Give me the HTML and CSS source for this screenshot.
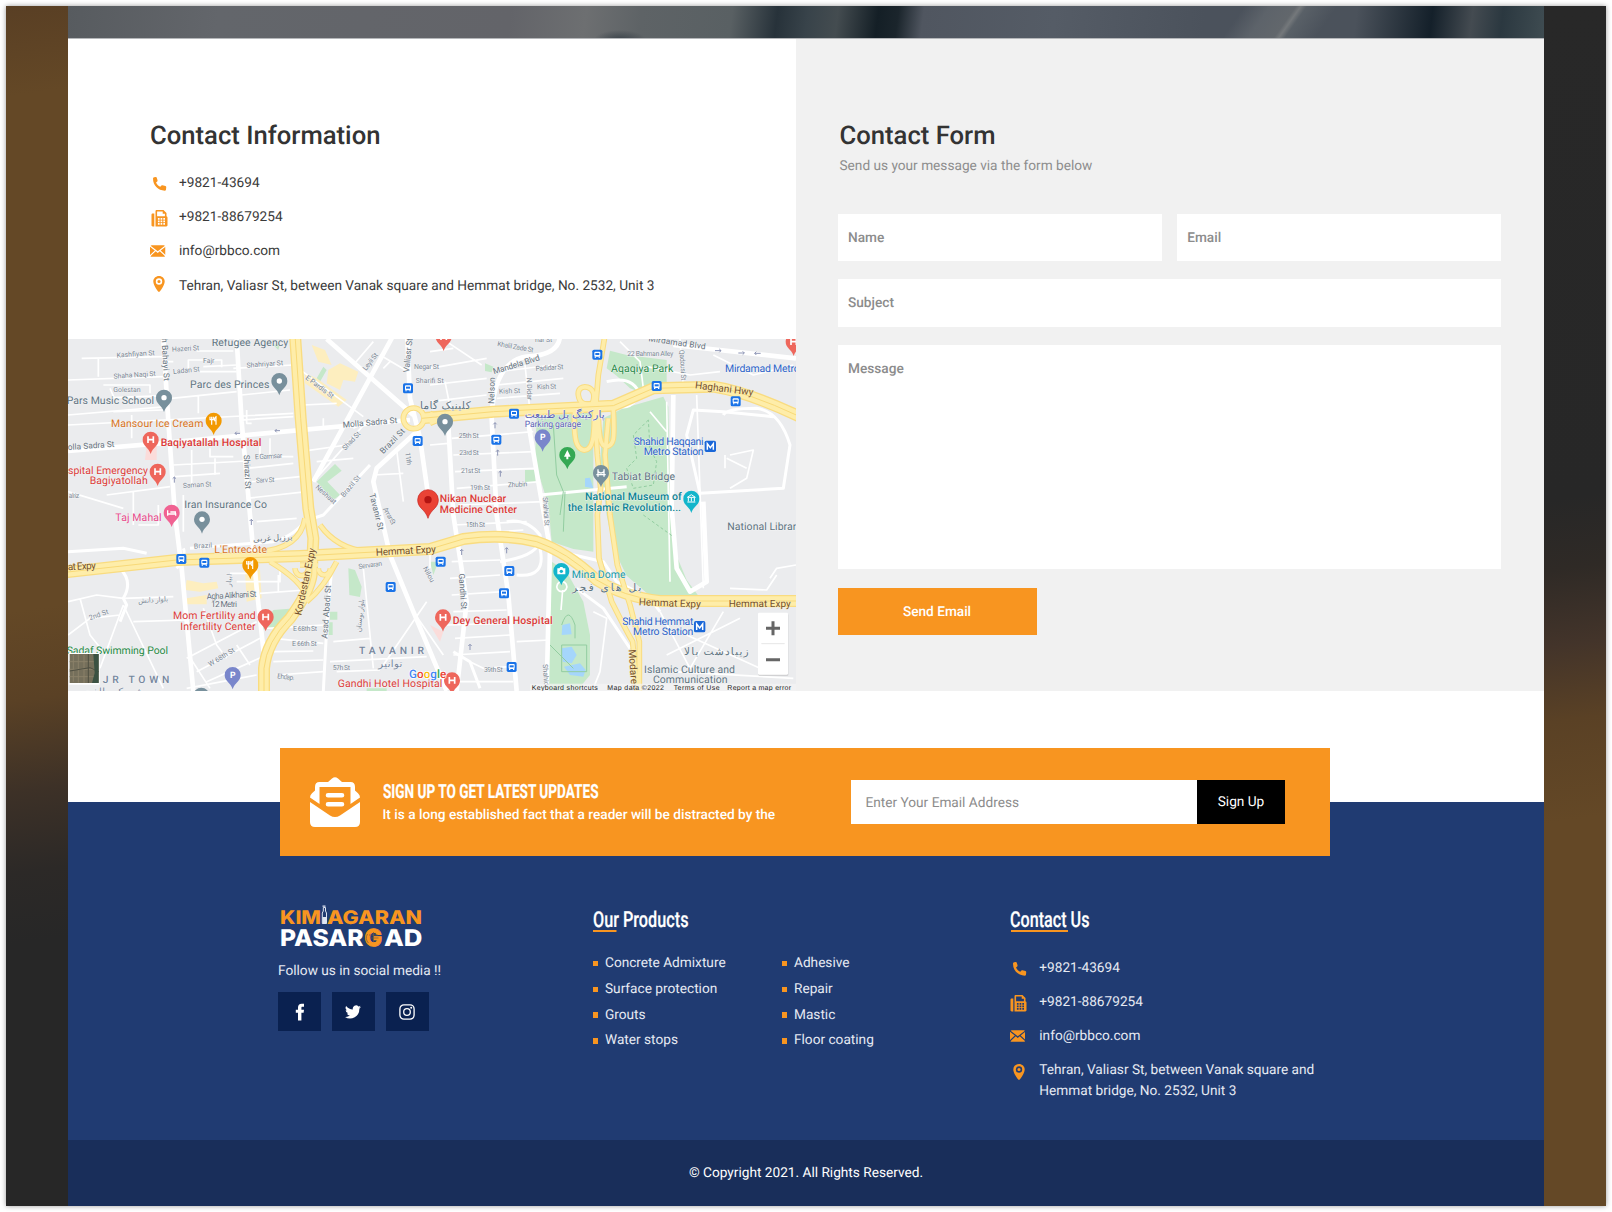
FILE: index.html
```html
<!DOCTYPE html>
<html lang="en">
<head>
<meta charset="utf-8">
<title>Contact - Kimiagaran Pasargad</title>
<link rel="stylesheet" href="styles.css">
</head>
<body>
<svg class="defs" width="0" height="0" aria-hidden="true">
  <defs>
    <symbol id="i-phone" viewBox="0 0 16 16"><path d="M2.2.8 4 .5c.5-.1.9.2 1 .6l.9 3c.1.4 0 .8-.3 1.1L4.300 6.300c.9 2 2.300 3.500 4.500 4.700l1.300-1.400c.3-.3.7-.4 1.100-.3l3.200.8c.5.1.8.6.8 1.100l-.3 2.900c-.1.700-.6 1-1.300 1C6.500 15 .9 9.500 1.100 2.200c0-.7.4-1.300 1.100-1.400z"/></symbol>
    <symbol id="i-fax" viewBox="0 0 16 17"><path fill-rule="evenodd" d="M1.200 3.500h1.600v13H1.200C.5 16.500 0 16 0 15.300V4.700c0-.7.5-1.200 1.200-1.200zM4 1.200C4 .5 4.500 0 5.200 0H12l3 3v3.200c.6.200 1 .7 1 1.300v7.800c0 .7-.5 1.200-1.200 1.200H4zM5.600 1.600v4.600h7.800V3.800h-2.200V1.600zM6.400 8v1.700h1.700V8zm2.700 0v1.700h1.700V8zm2.700 0v1.700h1.700V8zM6.400 10.600v1.600h1.700v-1.600zm2.700 0v1.600h1.700v-1.600zm2.700 0v1.600h1.700v-1.600zM6.400 13.100v1.600h1.700v-1.600zm2.700 0v1.600h1.700v-1.600zm2.700 0v1.600h1.700v-1.600z"/></symbol>
    <symbol id="i-mail" viewBox="0 0 16 12"><path d="M.6.500C.9.200 1.300 0 1.800 0h12.400c.5 0 .9.200 1.200.500L8 6.300zM0 1.500 5 5.600 0 10.200zM16 1.500v8.700l-5-4.600zM5.900 6.300 8 8l2.100-1.700 5.400 5c-.3.400-.8.700-1.300.7H1.800c-.5 0-1-.3-1.300-.7z"/></symbol>
    <symbol id="i-pin" viewBox="0 0 12 16"><path fill-rule="evenodd" d="M6 0c3.200 0 5.700 2.400 5.700 5.500C11.700 9.500 6.800 16 6 16S.3 9.500.3 5.500C.3 2.400 2.800 0 6 0zm0 2.300a3.200 3.200 0 1 0 0 6.400 3.200 3.200 0 0 0 0-6.400zM6 3.900a1.600 1.600 0 1 1 0 3.200 1.600 1.600 0 0 1 0-3.200z"/></symbol>
    <g id="m-bus"><rect x="-15" y="-15" width="30" height="30" rx="5" fill="#1a73e8"/><rect x="-9" y="-9" width="18" height="15" rx="3" fill="#fff"/><path d="M-6-5H6V1H-6z" fill="#1a73e8"/><path d="M-8 6h4v3h-4zM4 6h4v3H4z" fill="#fff"/></g>
    <g id="m-base"><path d="M0-24A24 24 0 0 1 24 0C24 20 6 22 0 43-6 22-24 20-24 0A24 24 0 0 1 0-24z"/></g>
    <g id="m-hosp"><use href="#m-base" fill="#ee675c"/><path d="M-8-10v20M8-10v20M-8 0H8" stroke="#fff" stroke-width="5"/></g>
    <g id="m-dot"><use href="#m-base" fill="#78909c"/><circle r="8" fill="#fff"/></g>
    <g id="m-food"><use href="#m-base" fill="#f29900"/><path d="M-6-12v24M-11-12v9h10v-9M7 12v-24c-5 3-5 9-3 14" stroke="#fff" stroke-width="3.500" fill="none"/></g>
    <g id="m-park"><use href="#m-base" fill="#7986cb"/><text class="pk" x="-8" y="9">P</text></g>
    <g id="m-metro"><rect x="-17" y="-17" width="34" height="34" rx="5" fill="#1a67d8"/><path d="M-9 10V-8l9 12 9-12v18" stroke="#fff" stroke-width="4.500" fill="none"/></g>
    <!-- expressways, drawn twice: casing and face -->
    <path id="hw-main" d="M705 0 722 250 745 520 760 610 755 720Q748 770 690 850 620 920 612 1000V1080M14 712 350 675 720 663 1110 642 1210 612Q1330 595 1430 620 1520 650 1610 735 1690 785 1800 798H2220M1085 250 1300 230 1660 212 1780 160 1960 155Q2060 170 2220 245"/>
    <path id="hw-ramp" d="M1635 0 1615 120 1605 240 1612 360 1622 460 1612 540 1617 670 1655 800Q1700 890 1718 920L1732 1080M1645 250 1635 360 1650 540 1672 690 1710 810 1738 920V1080M1597 205C1620 150 1550 140 1555 180 1560 220 1590 200 1620 225M1544 220C1540 320 1550 340 1570 345 1610 350 1600 260 1605 220M1660 225C1665 320 1660 330 1640 335 1620 335 1615 300 1615 220M630 680Q730 740 740 790M720 690h54M705 700a20 22 0 1 0 40 0M775 700a18 20 0 1 0 36 0M780 570Q830 640 920 650L1110 650M735 550Q720 640 600 650M830 680Q790 760 740 800M1110 235l35 15-35 15M1030 250a31 31 0 1 0 62 0a31 31 0 1 0-62 0"/>
  </defs>
</svg>

<div class="frame">
  <div class="strip strip-left"></div>
  <div class="page">
    <div class="hero"></div>

    <main class="contact">
      <section class="info">
        <div class="info-text">
          <h1 class="title">Contact Information</h1>
          <ul class="contact-list">
            <li><span class="ic"><svg class="phone"><use href="#i-phone"/></svg></span>+9821-43694</li>
            <li><span class="ic"><svg class="fax"><use href="#i-fax"/></svg></span>+9821-88679254</li>
            <li><span class="ic"><svg class="mail"><use href="#i-mail"/></svg></span>info@rbbco.com</li>
            <li><span class="ic"><svg class="pin"><use href="#i-pin"/></svg></span>Tehran, Valiasr St, between Vanak square and Hemmat bridge, No. 2532, Unit 3</li>
          </ul>
        </div>
        <svg class="map" viewBox="24 12 2184 1056" preserveAspectRatio="none">
          <rect x="24" y="12" width="2184" height="1056" fill="#ebecee"/>
          <!-- parks -->
          <g fill="#c5e8c9">
            <path d="M1430 245 1600 230V650L1540 642 1475 620 1465 510 1425 380z"/>
            <path d="M1630 250 1690 220 1810 185 1825 215 1830 520 1845 650 1880 735 1915 782H1770L1700 722 1660 640 1640 540 1620 380z"/>
            <path d="M1475 680 1520 710 1570 800 1590 900V1020L1550 1068H1465V900z"/>
            <path d="M1650 47 1700 60 1820 75V142L1750 175 1710 160 1670 122 1640 100z"/>
            <path d="M825 387 845 407 802 440 840 480 820 495 770 440zM865 700 885 705 905 755 900 786 868 780zM640 825 708 820 655 880 600 885zM810 830h22v24h-22zM808 862h10v38h-12zM1395 405h32v36h-32zM1110 680 1135 680 1120 720zM640 30 660 25 655 45zM770 130 790 95 800 105 780 140zM1275 85 1300 95 1295 112 1275 108zM920 1060h60v8h-60z"/>
          </g>
          <g fill="#a5d6fb"><path d="M1507 870 1530 865 1535 898 1505 900zM1505 940 1535 935 1550 960 1535 985 1508 980zM1512 995 1560 985 1577 1005 1570 1025 1530 1020zM1575 430 1590 428 1600 460 1575 455z"/></g>
          <g fill="#fdeebf"><path d="M755 30 795 45 815 90 775 80zM805 105 840 85 895 110 885 140 850 135 840 165 800 145zM735 115 770 130 860 195 835 215 735 145zM380 735 430 745 470 740 475 760 420 770 375 765zM380 790 440 780 440 808 380 808zM555 705 600 705 605 790 560 800z"/></g>
          <path d="M260 330h30v45h-35zM1110 870 1150 890 1140 920z" fill="#fbdcda"/>
          <!-- minor streets -->
          <g class="st s1">
            <path d="M65 70 310 65M115 70v55M24 135 310 125M130 150h140v25M150 160l12 28 150-6M24 240 320 215M24 270 700 235M160 230l150-5M215 240v70M420 110h110M385 100v-25h100v22M410 48h110M430 95l100-5M415 180v55M520 100 700 90M545 180 690 165M560 225v40h15M545 255 700 245M335 190 530 170M340 80h-20M450 340v25h70M395 345v110M340 390 560 378M465 370v50M345 425 480 415M600 320v45h100M560 400 700 385M575 440 720 425M630 310v60M560 490 740 470M140 480 330 455M220 470v100M24 470 190 520M370 480v110M235 570h60v-60M590 560l120-10"/>
            <path d="M960 60 1045 110M880 90 940 20M970 100 990 80M730 210 830 205M790 250v30M720 350 860 330M770 380 880 370M880 280 920 260 760 440M715 100 910 245M1010 345 1030 500M940 420 1030 415M1110 50 1180 40M1110 100 1280 70M1110 150 1280 130M1155 140 1175 240M1160 20 1265 90M1110 200 1280 180M1310 150 1510 130M1310 190 1500 175M1315 110 1480 90M1395 90 1410 230M1175 310 1420 290M1180 360 1420 350M1185 410 1425 400M1190 460 1440 440M1195 510 1450 500M1110 330 1165 325"/>
            <path d="M1680 20 1740 80 1750 160M1860 10 1870 160M1760 95 1890 120 1980 110M1960 60 2080 120 2200 90M2010 360 2080 345 2060 430 2010 460M1820 200 1830 740M1910 180 1930 760M1770 230 1820 290M1995 360v40M2000 370 2060 400"/>
            <path d="M24 800 110 780 190 790 340 785M24 900 90 850 180 840M60 790 90 900 130 950M190 810 310 1060M190 810 120 1000M220 860 380 855M430 820 470 930 500 970M380 970 590 860M410 1010 600 910M440 1040 620 960M385 960 450 1060M530 930 570 990M380 1060 590 1020M510 715h60M530 740h130v-40M655 720v50M600 775 735 765M640 980 790 975M620 880 790 870M640 910 790 925M640 950 760 948M650 1020 790 1010M810 980 1100 965M830 1010 960 1005M820 920 930 910M910 700 940 1000M1100 800l-130 190M1060 830 1150 960M1110 640v60M1175 680 1320 675M1170 730 1320 720M1175 780 1330 770M1180 830 1340 825M1160 870 1340 865M1185 910 1350 900M1180 960 1350 950M1230 980 1270 1000 1350 995M1200 1040h160M1180 570 1400 560M1190 600l200-15M1370 920 1470 915M1600 830 1640 850 1620 1010 1600 1060M1800 830 1890 1000 1990 830M1820 960 2040 850M1880 900 2100 1000M1840 1010 2200 1030M2130 730 2150 700 2208 690M2010 760 2120 765 2150 720"/>
          </g>
          <!-- larger streets -->
          <g class="st s2">
            <path d="M310 12 325 260 345 540 365 700 400 1068M530 12 545 260 570 540 590 760 612 960M24 348 300 325 560 300 1050 255M800 12 1060 240M1042 12 1050 190 1080 310 1110 520M1070 290 950 400 940 440 990 660 1060 830 1160 1068M760 440 1000 1M1300 12"/>
            <path d="M1500 0Q1500 60 1400 65 1300 80 1295 250L1310 540 1345 780 1370 1068M1165 270 1180 540 1220 800 1190 1068M1400 235 1440 470 1470 640 1460 1068M1840 30 2208 70M1840 180 1835 520 1850 700 1890 770 1940 740 1930 500"/>
          </g>
          <g class="st s3">
            <path d="M24 650 190 640 260 655M180 700Q220 740 190 790L200 810 180 860M350 700Q380 660 370 640M930 390 790 540 730 560M815 700 800 880 790 1068M740 550Q710 600 640 620L390 640M1180 950 1230 980 1260 1060M1990 240Q2000 220 2090 220 2160 230 2190 330L2170 460 1920 475 1880 300 1900 225 1990 230 2140 245M1640 140Q1720 120 1740 180 1700 240 1660 200M1500 650 1630 680 1670 740 1770 790 1800 830M1550 760 1630 820 1710 940M1440 480 1700 455M1320 680Q1450 660 1440 600 1400 550 1340 560M1370 720Q1460 730 1440 640"/>
          </g>
          <g fill="none" stroke="#92cda0" stroke-width="3"><path d="M1480 270 1490 420 1510 470 1500 540M1515 470l-5 120M1505 930h75v80h-75zM1470 930 1540 1000M1505 870q20-60 40 0v40"/><path d="M1765 255 1720 300 1730 370 1700 400 1720 460 1780 450 1790 380 1770 340zM1750 540l90 65" stroke-dasharray="9 7"/></g>
          <path d="M1505 740a15 15 0 1 0 1 0M1508 765l-5 60" class="st s1"/>
          <!-- highways -->
          <g class="hw">
            <use href="#hw-ramp" stroke="#f9dc80" stroke-width="17"/>
            <use href="#hw-main" stroke="#f9dc80" stroke-width="36"/>
            <use href="#hw-ramp" stroke="#feeda9" stroke-width="11"/>
            <use href="#hw-main" stroke="#feeda9" stroke-width="28"/>
            <use href="#hw-main" stroke="#f8d978" stroke-width="3"/>
          </g>
          <!-- place pins -->
          <use href="#m-dot" x="312" y="188"/><use href="#m-dot" x="658" y="138"/><use href="#m-food" x="461" y="257"/>
          <use href="#m-hosp" x="272" y="314"/><use href="#m-hosp" x="293" y="410"/><use href="#m-dot" x="426" y="553"/>
          <g transform="translate(335 533)"><use href="#m-base" fill="#f06292"/><path d="M-12-7v16M-12 4h24v5M-4-2h15v6" stroke="#fff" stroke-width="4" fill="none"/></g>
          <use href="#m-food" x="571" y="690"/><use href="#m-hosp" x="617" y="846"/><use href="#m-park" x="518" y="1020"/><use href="#m-dot" x="424" y="1082"/>
          <use href="#m-hosp" x="1151" y="5"/><use href="#m-hosp" x="2201" y="20"/><use href="#m-dot" x="1155" y="260"/><use href="#m-park" x="1448" y="307"/>
          <g transform="translate(1522 360)"><use href="#m-base" fill="#34a853"/><path d="M0-15 10 5H3v8h-6V5h-7z" fill="#fff"/></g>
          <g transform="translate(1623 414)"><use href="#m-base" fill="#78909c"/><path d="M-9-11v22M9-11v22M-14 5h28M-9-5Q0 5 9-5" stroke="#fff" stroke-width="4" fill="none"/></g>
          <g transform="translate(1894 491)"><use href="#m-base" fill="#12b5cb"/><path d="M-12-4 0-12 12-4zM-9-2v10M0-2v10M9-2v10M-12 10h24" stroke="#fff" stroke-width="3" fill="none"/></g>
          <g transform="translate(1504 708)"><use href="#m-base" fill="#12b5cb"/><path d="M-12-8h6l3-4h6l3 4h6V10h-24z" fill="#fff"/><circle cy="1" r="5" fill="#12b5cb"/></g>
          <use href="#m-hosp" x="1149" y="847"/><use href="#m-hosp" x="1176" y="1036"/>
          <g transform="translate(1104 494)"><path d="M0-30A31 31 0 0 1 31 0C31 27 8 28 0 56-8 28-31 27-31 0A31 31 0 0 1 0-30z" fill="#ea4335" stroke="#c5221f" stroke-width="2"/><circle r="11" fill="#b31412"/></g>
          <use href="#m-bus" x="1044" y="160"/><use href="#m-bus" x="1073" y="318"/><use href="#m-bus" x="1612" y="59"/><use href="#m-bus" x="1790" y="153"/><use href="#m-bus" x="2027" y="199"/><use href="#m-bus" x="1362" y="236"/><use href="#m-bus" x="1309" y="314"/><use href="#m-bus" x="364" y="672"/><use href="#m-bus" x="433" y="683"/><use href="#m-bus" x="992" y="756"/><use href="#m-bus" x="1142" y="680"/><use href="#m-bus" x="1348" y="708"/><use href="#m-bus" x="1332" y="775"/><use href="#m-bus" x="1355" y="996"/>
          <use href="#m-metro" x="1951" y="334"/><use href="#m-metro" x="1919" y="875"/>
          <path d="M540 295h-15l5-5m-5 5 5 5M660 287h-15l5-5m-5 5 5 5M343 443v-17l-5 5m5-5 5 5M1305 280v-17l-5 5m5-5 5 5M1313 362v-17l-5 5m5-5 5 5M1321 425v-17l-5 5m5-5 5 5M574 570v-17l-5 5m5-5 5 5M1205 660v-17l-5 5m5-5 5 5M1340 655v-17l-5 5m5-5 5 5M1230 945v-17l-5 5m5-5 5 5M1965 47h18l-5-5m5 5-5 5M2035 54h18l-5-5m5 5-5 5M2102 55h-18l5-5m-5 5 5 5" fill="none" stroke="#8d95b5" stroke-width="3"/>
          <!-- street names -->
          <g class="lb sm">
            <text x="170" y="68" textLength="115" transform="rotate(-4 170 68)">Kashfiyan St</text><text x="336" y="50" textLength="82" transform="rotate(-3 336 50)">Hazeri St</text><text x="429" y="84" textLength="34">Fajr</text><text x="340" y="117" textLength="80" transform="rotate(-6 340 117)">Ladan St</text><text x="161" y="131" textLength="127" transform="rotate(-4 161 131)">Shaha Naqi St</text><text x="160" y="171" textLength="82">Golestan</text><text x="560" y="98" textLength="110" transform="rotate(-4 560 98)">Shahriyar St</text>
            <text x="585" y="373" textLength="82" transform="rotate(-3 585 373)">E Garmsar</text><text x="588" y="443" textLength="56" transform="rotate(-2 588 443)">Sarv St</text><text x="369" y="459" textLength="86" transform="rotate(-3 369 459)">Saman St</text><text x="26" y="490" textLength="32">alriz</text><text x="918" y="108" textLength="60" transform="rotate(-52 918 108)">Leyli St</text><text x="735" y="131" textLength="100" transform="rotate(37 735 131)">E Pardis St</text><text x="856" y="347" textLength="68" transform="rotate(-47 856 347)">Shad St</text><text x="765" y="458" textLength="76" transform="rotate(42 765 458)">Neshaat</text><text x="852" y="488" textLength="78" transform="rotate(-50 852 488)">Brazil St</text><text x="1036" y="353" textLength="38" transform="rotate(83 1036 353)">11th</text><text x="1062" y="102" textLength="75">Negar St</text><text x="1067" y="145" textLength="84">Sharifi St</text>
            <text x="1311" y="33" textLength="110" transform="rotate(10 1311 33)">Khalil Zade St</text><text x="1425" y="22" textLength="52">har St</text><text x="1427" y="108" textLength="84" transform="rotate(-4 1427 108)">Padidar St</text><text x="1317" y="176" textLength="64" transform="rotate(-2 1317 176)">Kish St</text><text x="1431" y="163" textLength="58" transform="rotate(-2 1431 163)">Kish St</text><text x="1400" y="128" textLength="68" transform="rotate(88 1400 128)">N Didar</text><text x="1702" y="62" textLength="138">22 Bahman Alley</text><text x="1858" y="45" textLength="92" transform="rotate(86 1858 45)">Qadousi St</text><text x="1196" y="310" textLength="60">25th St</text><text x="1198" y="361" textLength="58">23rd St</text><text x="1203" y="415" textLength="58">21st St</text><text x="1230" y="466" textLength="60">19th St</text><text x="1344" y="457" textLength="58" transform="rotate(-3 1344 457)">Zhubin</text><text x="1448" y="487" textLength="86" transform="rotate(86 1448 487)">Shahidi St</text><text x="1217" y="577" textLength="58">15th St</text>
            <text x="402" y="641" textLength="55" transform="rotate(-4 402 641)">Brazil</text><text x="90" y="856" textLength="60" transform="rotate(-20 90 856)">2nd St</text><text x="235" y="805" textLength="90" transform="rotate(-4 235 805)">بلوار دانش</text><text x="450" y="995" textLength="88" transform="rotate(-31 450 995)">W 68th St</text><text x="699" y="887" textLength="72">E 68th St</text><text x="696" y="932" textLength="74">E 66th St</text><text x="818" y="1005" textLength="52">57h St</text><text x="651" y="1030" textLength="52" transform="rotate(6 651 1030)">Ehdap.</text><text x="896" y="702" textLength="72" transform="rotate(-8 896 702)">Servaran</text><text x="902" y="892" textLength="100" transform="rotate(-84 902 892)">بلوار بوستان</text><text x="968" y="522" textLength="56" transform="rotate(60 968 522)">Aman St</text><text x="1272" y="1012" textLength="56">39th St</text><text x="1448" y="988" textLength="70" transform="rotate(86 1448 988)">Shahidi</text><text x="1088" y="700" textLength="50" transform="rotate(60 1088 700)">Nilou</text><text x="512" y="755" textLength="38" transform="rotate(-84 512 755)">ابیار</text>
          </g>
          <g class="lb md">
            <text x="305" y="10" textLength="128" transform="rotate(87 305 10)">h Bahayi St</text><text x="551" y="360" textLength="102" transform="rotate(87 551 360)">Shirazi St</text><text x="24" y="345" textLength="140" transform="rotate(-4 24 345)">olla Sadra St</text><text x="849" y="278" textLength="164" transform="rotate(-5 849 278)">Molla Sadra St</text><text x="970" y="358" textLength="95" transform="rotate(-46 970 358)">Brazil St</text><text x="1047" y="113" textLength="103" transform="rotate(-84 1047 113)">Valiasr St</text><text x="928" y="478" textLength="112" transform="rotate(76 928 478)">Tavanir St</text><text x="1302" y="207" textLength="80" transform="rotate(-88 1302 207)">Nelson</text><text x="1302" y="118" textLength="145" transform="rotate(-17 1302 118)">Mandela Blvd</text><text x="1765" y="19" textLength="172" transform="rotate(8 1765 19)">Mirdamad Blvd</text><text x="440" y="793" textLength="150" transform="rotate(-3 440 793)">Agha Alikhani St</text><text x="453" y="815" textLength="78">12 Metri</text><text x="802" y="911" textLength="160" transform="rotate(-86 802 911)">Asad Abadi St</text><text x="1196" y="716" textLength="108" transform="rotate(86 1196 716)">Gandhi St</text><text x="580" y="620" textLength="118" transform="rotate(-3 580 620)">برزیل غربی</text>
          </g>
          <g class="lb hwl">
            <text x="24" y="706" textLength="84" transform="rotate(-3 24 706)">at Expy</text><text x="948" y="662" textLength="180" transform="rotate(-3 948 662)">Hemmat Expy</text><text x="724" y="842" textLength="205" transform="rotate(-78 724 842)">Kordestan Expy</text><text x="1904" y="160" textLength="176" transform="rotate(7 1904 160)">Haghani Hwy</text><text x="1736" y="811" textLength="186" transform="rotate(2 1736 811)">Hemmat Expy</text><text x="2006" y="815" textLength="186">Hemmat Expy</text><text x="1706" y="944" textLength="120" transform="rotate(86 1706 944)">Modares</text>
          </g>
          <!-- place names -->
          <g class="lb pl">
            <text x="455" y="33" textLength="230">Refugee Agency</text><text x="390" y="158" textLength="238">Parc des Princes</text><text x="20" y="208" textLength="262">Pars Music School</text><text x="373" y="518" textLength="248">Iran Insurance Co</text><text x="1655" y="436" textLength="190">Tabiat Bridge</text><text x="2002" y="586" textLength="222">National Library</text><text x="1752" y="1014" textLength="273">Islamic Culture and</text><text x="1779" y="1044" textLength="224">Communication</text><text x="1080" y="223" textLength="152">کلینیک گاما</text><text x="1536" y="768" textLength="208">بل  های  فجر</text><text x="1872" y="960" textLength="194">زیبادشت  بالا</text>
            <g fill="#d9731a"><text x="153" y="277" textLength="277">Mansour Ice Cream</text><text x="463" y="655" textLength="158">L'Entrecôte</text></g>
            <g fill="#dd3b38"><text x="24" y="416" textLength="240">spital Emergency</text><text x="89" y="447" textLength="174">Bagiyatollah</text><text x="339" y="852" textLength="248">Mom Fertility and</text><text x="361" y="884" textLength="226">Infertility Center</text><text x="833" y="1057" textLength="314">Gandhi Hotel Hospital</text><g class="st-b"><text x="302" y="334" textLength="302">Baqiyatallah Hospital</text><text x="1178" y="867" textLength="300">Dey General Hospital</text><text x="1139" y="502" textLength="200">Nikan Nuclear</text><text x="1139" y="533" textLength="232">Medicine Center</text></g></g>
            <text x="166" y="558" textLength="139" fill="#e8488a">Taj Mahal</text>
            <g fill="#268a45"><text x="20" y="956" textLength="304">Sadaf Swimming Pool</text><text x="1653" y="111" textLength="187">Aqaqiya Park</text></g>
            <g fill="#2b63c9"><text x="1995" y="111" textLength="224">Mirdamad Metro</text><text x="1721" y="329" textLength="210">Shahid Haqqani</text><text x="1751" y="359" textLength="180">Metro Station</text><text x="1687" y="871" textLength="213">Shahid Hemmat</text><text x="1719" y="901" textLength="181">Metro Station</text></g>
            <g fill="#0d8494" class="st-m"><text x="1575" y="495" textLength="290">National Museum of</text><text x="1523" y="527" textLength="340">the Islamic Revolution...</text></g>
            <text x="1535" y="729" textLength="162" fill="#149aa8">Mina Dome</text>
            <g fill="#5b63b8"><text x="1394" y="248" textLength="240">پارکینگ پل طبیعت</text><text x="1394" y="276" textLength="169" class="t24">Parking garage</text></g>
          </g>
          <g class="lb area"><text x="128" y="1043" textLength="200">JR TOWN</text><text x="897" y="957" textLength="195">TAVANIR</text><text x="955" y="995" textLength="72" class="fa">توانیر</text><text x="60" y="1080" textLength="190" class="fa">شهرک والفجر</text></g>
          <!-- satellite thumbnail -->
          <rect x="26" y="954" width="93" height="95" fill="#fff"/><rect x="29" y="957" width="87" height="87" fill="#756f5b"/><path d="M40 960v80M55 957v86M72 960v84M29 980h80M29 1003h85M29 1025h75" stroke="#8a8069" stroke-width="3"/><path d="M29 1008 90 998 116 1010M85 957v87" stroke="#4f4f42" stroke-width="3" fill="none"/><path d="M100 957h16v87h-20l8-30z" fill="#3b5142"/>
          <text class="google" x="1047" y="1028" textLength="112"><tspan fill="#4285f4">G</tspan><tspan fill="#ea4335">o</tspan><tspan fill="#fbbc05">o</tspan><tspan fill="#4285f4">g</tspan><tspan fill="#34a853">l</tspan><tspan fill="#ea4335">e</tspan></text>
          <rect x="1410" y="1046" width="798" height="22" fill="#f5f5f5" opacity=".7"/>
          <g class="terms"><text x="1415" y="1064" textLength="198">Keyboard shortcuts</text><text x="1642" y="1064" textLength="170">Map data ©2022</text><text x="1841" y="1064" textLength="138">Terms of Use</text><text x="2002" y="1064" textLength="191">Report a map error</text></g>
          <rect x="2095" y="836" width="90" height="187" rx="4" fill="#aaa" opacity=".4"/><rect x="2094" y="833" width="90" height="186" rx="4" fill="#fff"/><path d="M2104 926h70" stroke="#e6e6e6" stroke-width="3"/><path d="M2118 880h42M2139 859v42M2118 974h42" stroke="#666" stroke-width="9"/>
        </svg>
      </section>

      <section class="form-side">
        <h2 class="title">Contact Form</h2>
        <p class="sub">Send us your message via the form below</p>
        <form class="form">
          <input placeholder="Name"><input placeholder="Email">
          <input class="wide" placeholder="Subject">
          <textarea class="wide" placeholder="Message"></textarea>
          <button type="button" class="send">Send Email</button>
        </form>
      </section>
    </main>

    <footer class="footer">
      <div class="signup">
        <svg class="env" viewBox="0 0 50 50"><path fill="#fff" d="M9.500 5H18l4-3.500q3-2.500 6 0L32 5h8.500Q45 5 45 10v3.500l3 2.700q2 1.800 2 4.300L40.500 27V10h-31v17L0 20.500q0-2.500 2-4.300l3-2.700V10q0-5 4.500-5zM0 25l20 13.500q5 3.200 10 0L50 25v20q0 5-5 5H5q-5 0-5-5zM18 16h14a2.300 2.300 0 0 1 0 4.600H18a2.300 2.300 0 0 1 0-4.600zm0 9h14a2.300 2.300 0 0 1 0 4.600H18a2.300 2.300 0 0 1 0-4.600z"/></svg>
        <div class="signup-text">
          <svg class="head bold" width="220" height="22"><text x="0" y="17.500" textLength="215.500" lengthAdjust="spacingAndGlyphs" font-size="19.500">SIGN UP TO GET LATEST UPDATES</text></svg>
          <p>It is a long established fact that a reader will be distracted by the</p>
        </div>
        <form class="signup-form"><input placeholder="Enter Your Email Address"><button type="button">Sign Up</button></form>
      </div>

      <div class="cols">
        <div class="brand">
          <svg class="logo" width="146" height="44" viewBox="278 904 146 44">
            <g fill="#f89520" font-size="18.800"><text x="280" y="923.800" textLength="41" lengthAdjust="spacingAndGlyphs">KIM</text><text x="327" y="923.800" textLength="95" lengthAdjust="spacingAndGlyphs">AGARAN</text></g>
            <path d="M322.300 923.500v-10.500l1-2v-3.500h2.200v3.500l1 2v10.500z" fill="#213b72" stroke="#dfe5f2" stroke-width="1"/><path d="M322.500 917h4v6.500h-4zM322.500 905.500h3v1.200h-3z" fill="#dfe5f2"/>
            <g fill="#fff" font-size="23"><text x="280" y="946" textLength="83.500" lengthAdjust="spacingAndGlyphs">PASAR</text><text x="384" y="946" textLength="38.500" lengthAdjust="spacingAndGlyphs">AD</text></g>
            <text x="364.500" y="946" font-size="23.500" textLength="17.500" lengthAdjust="spacingAndGlyphs" fill="#f89520" stroke="#f89520" stroke-width="1">G</text><path d="M369 935h9M370.500 938h8M373.500 932v10M367.500 934a7 7 0 0 0 1 9" fill="none" stroke="#7a5a3c" stroke-width=".7"/>
          </svg>
          <p>Follow us in social media !!</p>
          <div class="social">
            <a><svg width="10" height="18" viewBox="0 0 10 18"><path d="M3 17.500V9.800H.8V6.700H3V4.500C3 2 4.300.7 6.700.7H9v3H7.400c-.8 0-1 .4-1 1.200v1.800H9l-.4 3.100H6.400v7.700z"/></svg></a>
            <a><svg width="16" height="14" viewBox="0 0 24 20"><path d="M24 2.400a9.800 9.800 0 0 1-2.800.8A5 5 0 0 0 23.300.5a9.900 9.900 0 0 1-3.100 1.200 4.900 4.900 0 0 0-8.400 4.500A14 14 0 0 1 1.700 1a4.900 4.900 0 0 0 1.500 6.600 4.900 4.900 0 0 1-2.200-.6 4.900 4.900 0 0 0 3.900 4.900 4.900 4.900 0 0 1-2.200.1 4.900 4.900 0 0 0 4.600 3.400A9.900 9.900 0 0 1 0 17.500 14 14 0 0 0 21.500 5z"/></svg></a>
            <a><svg width="16" height="16" viewBox="0 0 16 16"><rect x=".9" y=".9" width="14.200" height="14.200" rx="4" fill="none" stroke="#fff" stroke-width="1.300"/><circle cx="8" cy="8" r="3.300" fill="none" stroke="#fff" stroke-width="1.300"/><circle cx="12.200" cy="3.800" r="1"/></svg></a>
          </div>
        </div>

        <div class="products">
          <svg class="head" width="100" height="32"><text x="0" y="22.500" textLength="95.500" lengthAdjust="spacingAndGlyphs" font-size="22">Our Products</text><path d="M0 27h23.500" stroke="#f89520" stroke-width="2"/></svg>
          <div class="lists">
            <ul><li>Concrete Admixture</li><li>Surface protection</li><li>Grouts</li><li>Water stops</li></ul>
            <ul><li>Adhesive</li><li>Repair</li><li>Mastic</li><li>Floor coating</li></ul>
          </div>
        </div>

        <div class="reach">
          <svg class="head" width="100" height="32"><text x="0" y="22.500" textLength="79.500" lengthAdjust="spacingAndGlyphs" font-size="22">Contact Us</text><path d="M1 27h57" stroke="#f89520" stroke-width="2"/></svg>
          <ul class="contact-list">
            <li><span class="ic"><svg class="phone"><use href="#i-phone"/></svg></span>+9821-43694</li>
            <li><span class="ic"><svg class="fax"><use href="#i-fax"/></svg></span>+9821-88679254</li>
            <li><span class="ic"><svg class="mail"><use href="#i-mail"/></svg></span>info@rbbco.com</li>
            <li><span class="ic"><svg class="pin"><use href="#i-pin"/></svg></span><span>Tehran, Valiasr St, between Vanak square and<br>Hemmat bridge, No. 2532, Unit 3</span></li>
          </ul>
        </div>
      </div>
    </footer>
    <div class="copyright">© Copyright 2021. All Rights Reserved.</div>
  </div>
  <div class="strip strip-right"></div>
</div>
</body>
</html>
```
FILE: styles.css
```css
* { box-sizing: border-box; }
html, body { height: 1212px; overflow: hidden; }
body { margin: 0; padding: 6px; background: #fff; font-family: Roboto, "Noto Sans", sans-serif; font-size: 13.670px; color: #3a3a3a; text-rendering: geometricPrecision; }
h1, h2, p, ul { margin: 0; padding: 0; }
ul { list-style: none; }
svg { display: block; }
.defs { position: absolute; }
input, textarea, button { font: inherit; border: 0; border-radius: 0; margin: 0; outline: 0; resize: none; text-rendering: inherit; }
::placeholder { color: #8c8c8c; opacity: 1; }

.frame { width: 1600px; height: 1200px; display: flex; box-shadow: 0 0 5px rgba(0, 0, 0, .4); }
.strip { width: 62px; }
.strip-left { background: linear-gradient(172deg, #593f24 0, #644826 90px, #644826 600px, #5a4125 690px, #3d3127 780px, #2c2927 860px, #272727 930px); }
.strip-right { background: linear-gradient(172deg, #282828 0, #272727 490px, #2f2a26 560px, #43342a 635px, #5a4125 710px, #644826 810px); }
.page { width: 1476px; background: #fff; }
.hero { height: 33px; border-bottom: 1px solid #b5b7ba; background:
  radial-gradient(ellipse 26px 10px at 552px 34px, #3a4249 0, transparent 100%),
  linear-gradient(125deg, transparent 964px, #5d636a 985px, #62676c 1006px, #74787b 1010px, #596067 1015px, transparent 1040px),
  linear-gradient(97deg, #575b5f 0, #63666b 150px, #636469 440px, #6d6f71 515px, #5e6366 570px, #596063 660px, #27323a 705px, #38434a 735px, #444c50 765px, #141f26 805px, #1b252c 825px, #505660 850px, #555c66 980px, #4b525c 1130px, #4b525b 1280px, #14202a 1355px, #444b51 1395px, #2b3840 1425px, #424f54 1476px); }

.contact { display: grid; grid-template-columns: 728px 748px; height: 652px; }
.info { display: flex; flex-direction: column; }
.info-text { height: 300px; padding: 82px 0 0 82px; }
.title { font-size: 25.650px; font-weight: 500; line-height: 30px; color: #333; }
.info .contact-list { margin-top: 15px; }
.contact-list li { display: flex; min-height: 34.200px; line-height: 34.200px; white-space: nowrap; }
.ic { width: 29px; flex: none; }
.ic svg { fill: #f89520; }
.phone { width: 15px; height: 16px; margin: 10px 0 0 2px; }
.fax { width: 17px; height: 17px; margin: 9.500px 0 0 .500px; }
.mail { width: 15.500px; height: 12px; margin: 11px 0 0 0; }
.pin { width: 12px; height: 16px; margin: 7.500px 0 0 3px; }
.map { width: 728px; height: 352px; }

.lb { fill: #7b8794; font-family: Roboto, "DejaVu Sans", sans-serif; }
.lb text { paint-order: stroke; stroke: #f4f5f6; stroke-width: 3px; stroke-opacity: .8; }
.sm { font-size: 21px; }
.md { font-size: 25px; fill: #66727d; }
.lb.hwl { font-size: 30px; fill: #74502c; }
.hwl text { stroke: #fdeeb5; }
.pl { font-size: 31.500px; fill: #5e7481; }
.st-b, .st-m { font-weight: 500; }
.t24 { font-size: 26px; }
.area { font-size: 31px; font-weight: 500; fill: #75869d; }
.fa { font-weight: 400; font-size: 30px; }
.pk { font: 700 26px Roboto, sans-serif; fill: #fff; }
.google { font: 500 35px Roboto, sans-serif; paint-order: stroke; stroke: #fff; stroke-width: 4px; }
.terms { font: 21px "Liberation Sans", sans-serif; fill: #222; }
.st { fill: none; stroke: #fff; stroke-linejoin: round; }
.s1 { stroke-width: 5; }
.s2 { stroke-width: 14; }
.s3 { stroke-width: 9; }
.hw { fill: none; stroke-linejoin: round; }

.form-side { background: #f1f1f1; padding: 82px 43px 0 41.500px; }
.form-side .title { padding-left: 2px; }
.sub { padding-left: 2px; margin-top: 5px; line-height: 20px; color: #8d8d8d; }
.form { margin-top: 37.500px; display: grid; grid-template-columns: 1fr 1fr; column-gap: 15px; row-gap: 18.500px; }
.form input, .form textarea { width: 100%; height: 47.300px; padding: 1px 10.500px 0; background: #fff; font-weight: 500; }
.form textarea { height: 224px; padding: 15.500px 10.500px; display: block; }
.wide { grid-column: 1 / -1; }
.send { width: 199px; height: 46.500px; margin-top: .500px; padding-top: 2px; background: #f89520; color: #fff; font-weight: 500; }

.footer { margin-top: 111px; height: 338px; background: #203b72; color: #e6eaf2; }
.signup { height: 108px; width: 1050px; margin-left: 212px; background: #f89520; display: flex; align-items: center; padding: 0 45px 0 29.500px; transform: translateY(-54px); }
.env { width: 50px; height: 50px; margin-right: 23px; }
.signup-text { width: 468.500px; color: #fff; font-weight: 500; white-space: nowrap; }
.signup-text p { line-height: 20px; margin-top: 3px; }
.head text { fill: #fff; font-family: Roboto, sans-serif; font-weight: 500; stroke: #fff; stroke-width: .200px; }
.bold text { font-weight: 700; }
.signup-form { display: flex; height: 44px; }
.signup-form input { width: 346px; padding: 1px 14.500px 0; background: #fff; }
.signup-form button { width: 88px; background: #000; color: #fff; }
.cols { display: flex; padding-left: 210px; margin-top: -6px; }
.brand { width: 314.500px; }
.logo { font-family: Inter, "Open Sans", sans-serif; font-weight: 800; }
.brand p { line-height: 20px; margin-top: 13px; }
.social { display: flex; gap: 10.500px; margin-top: 11px; }
.social a { width: 43.300px; height: 39px; background: #0a2150; display: flex; align-items: center; justify-content: center; }
.social svg { fill: #fff; }
.products { width: 417.300px; }
.lists { display: flex; margin-top: 15.300px; }
.lists ul { width: 189px; }
.lists li { display: flex; align-items: center; line-height: 25.700px; }
.lists li::before { content: ""; width: 5.500px; height: 5.500px; margin: 0 7px 1px 0; background: #f89520; }
.reach .contact-list { margin-top: 15px; }
.reach .ic { width: 29.500px; }
.reach li:last-child { line-height: 21.300px; padding-top: 6.500px; }
.reach .pin { margin-top: 3.500px; }
.copyright { height: 66px; background: #192e5a; color: #fff; text-align: center; line-height: 67px; }
```
